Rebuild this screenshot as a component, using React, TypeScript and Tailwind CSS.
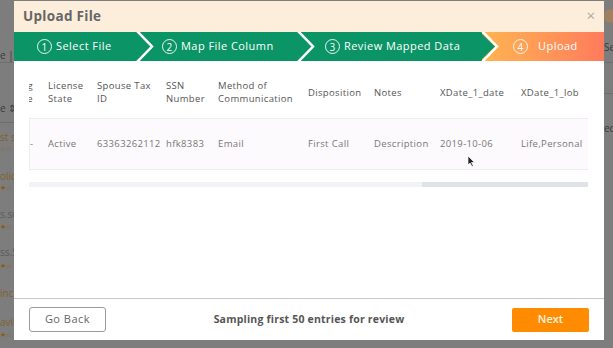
import React from "react";

const font = { fontFamily: '"Open Sans", "Noto Sans", Arial, sans-serif' };

const cols: { w: number; h: string[]; v: string }[] = [
  { w: 49, h: ["License", "State"], v: "Active" },
  { w: 69, h: ["Spouse Tax", "ID"], v: "63363262112" },
  { w: 52, h: ["SSN", "Number"], v: "hfk8383" },
  { w: 90, h: ["Method of", "Communication"], v: "Email" },
  { w: 66, h: ["Disposition"], v: "First Call" },
  { w: 66, h: ["Notes"], v: "Description" },
  { w: 81, h: ["XDate_1_date"], v: "2019-10-06" },
  { w: 80, h: ["XDate_1_lob"], v: "Life,Personal" },
];

function Circle({ n }: { n: number }) {
  return (
    <span className="flex h-[15px] w-[15px] shrink-0 items-center justify-center rounded-full border border-white/90 text-[10px] leading-none">
      {n}
    </span>
  );
}

export default function App() {
  return (
    <div className="relative h-[348px] w-[613px] overflow-hidden bg-[#7d7d7d]" style={font}>
      {/* background page fragments */}
      <div className="flex h-full justify-between">
        <div className="relative w-[14px] overflow-hidden text-[10px] leading-none text-[#3a3a3a]">
          <div className="absolute left-0 top-[50px] whitespace-nowrap">e | 1</div>
          <div className="absolute left-0 top-[62px] h-px w-full bg-[#6e6e6e]" />
          <div className="absolute left-0 top-[103px] whitespace-nowrap">e ⇕</div>
          <div className="absolute left-0 top-[122px] h-px w-full bg-[#6e6e6e]" />
          <div className="absolute left-0 top-[132px] whitespace-nowrap text-[#80602e]">st s</div>
          <div className="absolute left-0 top-[145px] whitespace-nowrap text-[7px] text-[#8a5a10]">☆☆</div>
          <div className="absolute left-0 top-[171px] whitespace-nowrap text-[#80602e]">olic</div>
          <div className="absolute left-0 top-[184px] whitespace-nowrap text-[7px] text-[#8a5a10]">★☆</div>
          <div className="absolute left-0 top-[209px] whitespace-nowrap text-[#5a5a5a]">s.sc</div>
          <div className="absolute left-0 top-[223px] whitespace-nowrap text-[7px] text-[#8a5a10]">★☆</div>
          <div className="absolute left-0 top-[247px] whitespace-nowrap text-[#5a5a5a]">ss.S</div>
          <div className="absolute left-0 top-[262px] whitespace-nowrap text-[7px] text-[#8a5a10]">★☆</div>
          <div className="absolute left-0 top-[288px] whitespace-nowrap text-[#80602e]">inc</div>
          <div className="absolute left-0 top-[317px] whitespace-nowrap text-[#80602e]">avil</div>
          <div className="absolute left-0 top-[331px] whitespace-nowrap text-[7px] text-[#8a5a10]">★☆</div>
        </div>
        <div className="relative w-[9px] overflow-hidden text-[10px] leading-none text-[#3a3a3a]">
          <div className="absolute left-0 top-[9px] h-[14px] w-[14px] rounded-full bg-[#a08060]" />
          <div className="absolute left-0 top-[42px] whitespace-nowrap">Se</div>
          <div className="absolute left-0 top-[62px] h-px w-full bg-[#6e6e6e]" />
          <div className="absolute left-0 top-[93px] h-px w-full bg-[#6e6e6e]" />
          <div className="absolute left-0 top-[123px] whitespace-nowrap">ec</div>
        </div>
      </div>

      {/* modal */}
      <div className="absolute left-[14px] top-[1px] flex h-[339px] w-[590px] flex-col bg-white">
        <div className="flex h-[31px] items-center justify-between bg-[#fdeedc] pl-[9px] pr-[9px]">
          <span className="text-[13.5px] font-bold tracking-[0.3px] text-[#666]">Upload File</span>
          <span className="-mt-[2px] text-[15px] leading-none text-[#aaa]">×</span>
        </div>

        {/* steps */}
        <div className="relative flex h-[29px] text-[11px] tracking-[0.45px] text-white">
          <div className="flex w-[123px] items-center gap-[4px] bg-[#0b9466] pl-[23px]">
            <Circle n={1} />
            <span>Select File</span>
          </div>
          <div className="flex w-[161px] items-center gap-[4px] bg-[#0b9466] pl-[25px]">
            <Circle n={2} />
            <span>Map File Column</span>
          </div>
          <div className="flex w-[184px] items-center gap-[4px] bg-[#0b9466] pl-[27px]">
            <Circle n={3} />
            <span>Review Mapped Data</span>
          </div>
          <div className="flex flex-1 items-center gap-[10px] bg-gradient-to-r from-[#ffb450] to-[#ff7a5c] pl-[31px]">
            <Circle n={4} />
            <span>Upload</span>
          </div>
          <svg className="absolute left-0 top-0" width="590" height="29" viewBox="0 0 590 29">
            <polygon points="466,0 481,14.5 466,29" fill="#0b9466" />
            <polyline points="123,-1 138,14.5 123,30" fill="none" stroke="white" strokeWidth="2.5" />
            <polyline points="284,-1 299,14.5 284,30" fill="none" stroke="white" strokeWidth="2.5" />
            <polyline points="468,-1 483,14.5 468,30" fill="none" stroke="white" strokeWidth="2.5" />
          </svg>
        </div>

        {/* table area */}
        <div className="flex h-[237px] flex-col pl-[15px] pr-[16px]">
          <div className="flex h-[57px] items-start overflow-hidden pt-[18px] text-[9.5px] font-medium leading-[13px] tracking-[0.35px] text-[#555]">
            <div className="flex h-[26px] w-[4px] shrink-0 flex-col items-end overflow-hidden text-right">
              <span className="whitespace-nowrap">g</span>
              <span className="whitespace-nowrap">e</span>
            </div>
            {cols.map((c, i) => (
              <div key={i} className="flex h-[26px] shrink-0 flex-col justify-center whitespace-nowrap pl-[15px]" style={{ width: c.w }}>
                {c.h.map((t, j) => (
                  <span key={j}>{t}</span>
                ))}
              </div>
            ))}
          </div>
          <div className="flex h-[52px] items-center overflow-hidden border-y border-l border-[#ededf1] bg-[#fcfafc] text-[9.5px] tracking-[0.35px] text-[#777]">
            <div className="w-[3px] shrink-0 overflow-hidden text-right">-</div>
            {cols.map((c, i) => (
              <div key={i} className="shrink-0 whitespace-nowrap pl-[15px]" style={{ width: c.w }}>
                {c.v}
              </div>
            ))}
          </div>
          <div className="mt-[12px] flex h-[5px] bg-[#f1f3f8]">
            <div className="w-[393px]" />
            <div className="flex-1 bg-[#dfe3e8]" />
          </div>
        </div>

        {/* footer */}
        <div className="flex flex-1 items-center justify-between border-t border-[#c8c8c8] pl-[15px] pr-[15px]">
          <button className="flex h-[25px] w-[77px] items-center justify-center rounded-[3px] border border-[#9a9a9a] text-[11px] tracking-[0.5px] text-[#666]">
            Go Back
          </button>
          <span className="text-[10.5px] font-bold tracking-[0.2px] text-[#555]">Sampling first 50 entries for review</span>
          <button className="flex h-[24px] w-[77px] items-center justify-center rounded-[2px] bg-[#ff8c00] text-[11px] font-semibold text-[#fff3e0]">
            Next
          </button>
        </div>
      </div>

      {/* cursor */}
      <svg className="absolute left-[467px] top-[156px]" width="8" height="11" viewBox="0 0 8 11">
        <path d="M1 0 L1 9 L3 7 L5 10.5 L6.3 9.8 L4.5 6.5 L7.5 6.5 Z" fill="#222" stroke="white" strokeWidth="0.7" />
      </svg>
    </div>
  );
}
